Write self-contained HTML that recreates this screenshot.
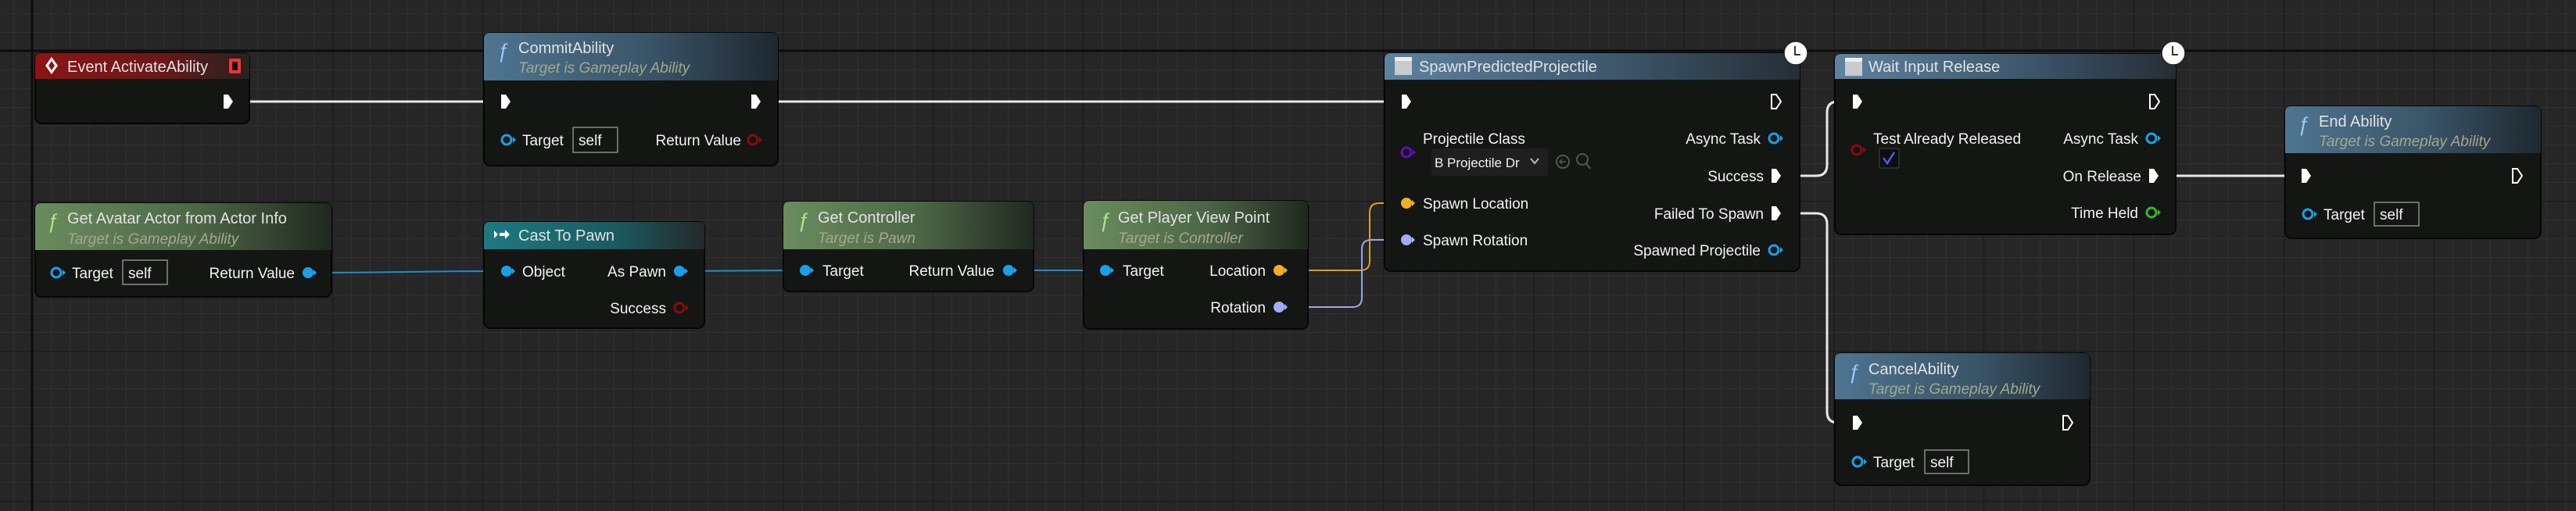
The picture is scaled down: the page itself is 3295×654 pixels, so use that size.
<!DOCTYPE html>
<html><head><meta charset="utf-8">
<style>
html,body{margin:0;padding:0;background:#262626;width:3295px;height:654px;overflow:hidden}
svg{display:block}
text{font-family:"Liberation Sans",sans-serif;}
.t{fill:#e2e2e2;font-size:20px}
.s{fill:#a4a88c;font-size:19px;font-style:italic}
.l{fill:#f2f2f2;font-size:19px}
.f{fill:#9cc8ff;font-size:26px;font-style:italic;font-family:"Liberation Sans",sans-serif}
.fg{fill:#a8e890;font-size:26px;font-style:italic;font-family:"Liberation Sans",sans-serif}
.body{fill:#141614;stroke:#060606;stroke-width:2}
</style></head><body>
<svg width="3295" height="654" viewBox="0 0 3295 654" xmlns="http://www.w3.org/2000/svg">
<defs>
<pattern id="fine" x="41" y="65" width="24" height="24" patternUnits="userSpaceOnUse">
<path d="M0 0H24M0 0V24" stroke="#303030" stroke-width="2" fill="none"/></pattern>
<pattern id="mid" x="41" y="65" width="192" height="192" patternUnits="userSpaceOnUse">
<path d="M0 0H192M0 0V192" stroke="#1b1b1b" stroke-width="2.5" fill="none"/></pattern>
<linearGradient id="gRed" x1="0" x2="1"><stop offset="0" stop-color="#8e1414"/><stop offset="0.6" stop-color="#6a1818"/><stop offset="1" stop-color="#262222"/></linearGradient>
<linearGradient id="gBlue" x1="0" x2="1"><stop offset="0" stop-color="#4e7590"/><stop offset="0.55" stop-color="#3a5568"/><stop offset="1" stop-color="#1e2830"/></linearGradient>
<linearGradient id="gBlue2" x1="0" x2="1"><stop offset="0" stop-color="#5d83a0"/><stop offset="0.5" stop-color="#405c72"/><stop offset="1" stop-color="#252e36"/></linearGradient>
<linearGradient id="gGreen" x1="0" x2="1"><stop offset="0" stop-color="#6a8c5e"/><stop offset="0.55" stop-color="#4c6646"/><stop offset="1" stop-color="#20281f"/></linearGradient>
<linearGradient id="gTeal" x1="0" x2="1"><stop offset="0" stop-color="#1d7a82"/><stop offset="0.6" stop-color="#1a5a60"/><stop offset="1" stop-color="#24292a"/></linearGradient>
</defs>
<rect width="3295" height="654" fill="#262626"/>
<rect width="3295" height="654" fill="url(#fine)"/>
<rect width="3295" height="654" fill="url(#mid)"/>
<path d="M41 0V654M0 65H3295" stroke="#0c0c0c" stroke-width="3"/>

<g fill="none" stroke-linecap="round">
<path d="M299 130H640" stroke="#e8e8e8" stroke-width="3"/>
<path d="M974 130H1790" stroke="#e8e8e8" stroke-width="3"/>
<path d="M403 349C520 349 520 347 640 347" stroke="#1a8fd0" stroke-width="2"/>
<path d="M878 347L1022 346" stroke="#1a8fd0" stroke-width="2"/>
<path d="M1298 346L1406 346" stroke="#1a8fd0" stroke-width="2"/>
<path d="M1645 346H1740Q1752 346 1752 334V272Q1752 260 1764 260H1792" stroke="#d9a21a" stroke-width="2"/>
<path d="M1645 393H1730Q1742 393 1742 381V319Q1742 307 1754 307H1792" stroke="#9aa6e8" stroke-width="2"/>
<path d="M2280 225H2323Q2337 225 2337 211V144Q2337 130 2351 130H2368" stroke="#e8e8e8" stroke-width="3"/>
<path d="M2280 273H2323Q2337 273 2337 287V527Q2337 541 2351 541H2368" stroke="#e8e8e8" stroke-width="3"/>
<path d="M2762 225H2943" stroke="#e8e8e8" stroke-width="3"/>
</g>

<g>
<rect x="45" y="68" width="274" height="90" rx="8" class="body"/>
<path d="M53 68H311Q319 68 319 76V101H45V76Q45 68 53 68Z" fill="url(#gRed)"/>
<path d="M66 73L74 84L66 95L58 84Z" fill="#fff"/><path d="M66 78L70 84L66 90L62 84Z" fill="#8e1414"/>
<text x="86" y="92" class="t">Event ActivateAbility</text>
<rect x="293" y="75" width="15" height="19" rx="2" fill="#ff3030"/><rect x="297" y="79" width="7" height="11" fill="#111"/>
<path d="M286 121H292L298 130L292 139H286Z" fill="#fff"/>
</g>

<g>
<rect x="619" y="42" width="376" height="170" rx="8" class="body"/>
<path d="M627 42H987Q995 42 995 50V103H619V50Q619 42 627 42Z" fill="url(#gBlue)"/>
<text x="636" y="74" class="f">ƒ</text>
<text x="663" y="68" class="t">CommitAbility</text>
<text x="663" y="93" class="s">Target is Gameplay Ability</text>
<path d="M641 121H647L653 130L647 139H641Z" fill="#fff"/>
<path d="M961 121H967L973 130L967 139H961Z" fill="#fff"/>
<circle cx="648" cy="179" r="6" fill="none" stroke="#1aa0e8" stroke-width="3"/><path d="M656 175L660 179L656 183Z" fill="#1aa0e8"/>
<text x="668" y="186" class="l">Target</text>
<rect x="733" y="163" width="57" height="32" fill="none" stroke="#8a8a8a" stroke-width="1.5"/><text x="740" y="186" class="l">self</text>
<text x="948" y="186" class="l" text-anchor="end">Return Value</text>
<circle cx="963" cy="179" r="6" fill="none" stroke="#8a0a0a" stroke-width="3"/><path d="M971 175L975 179L971 183Z" fill="#8a0a0a"/>
</g>

<g>
<rect x="45" y="260" width="379" height="120" rx="8" class="body"/>
<path d="M53 260H416Q424 260 424 268V320H45V268Q45 260 53 260Z" fill="url(#gGreen)"/>
<text x="60" y="292" class="fg">ƒ</text>
<text x="86" y="286" class="t">Get Avatar Actor from Actor Info</text>
<text x="86" y="312" class="s">Target is Gameplay Ability</text>
<circle cx="72" cy="349" r="6" fill="none" stroke="#1aa0e8" stroke-width="3"/><path d="M80 345L84 349L80 353Z" fill="#1aa0e8"/>
<text x="92" y="356" class="l">Target</text>
<rect x="157" y="333" width="57" height="31" fill="none" stroke="#8a8a8a" stroke-width="1.5"/><text x="164" y="356" class="l">self</text>
<text x="377" y="356" class="l" text-anchor="end">Return Value</text>
<circle cx="394" cy="349" r="7" fill="#1aa0e8"/><path d="M401 345L405 349L401 353Z" fill="#1aa0e8"/>
</g>

<g>
<rect x="619" y="284" width="282" height="136" rx="8" class="body"/>
<path d="M627 284H893Q901 284 901 292V319H619V292Q619 284 627 284Z" fill="url(#gTeal)"/>
<path d="M632 295L637 300L632 305Z M639 298H646V294L652 300L646 306V302H639Z" fill="#fff"/>
<text x="663" y="308" class="t">Cast To Pawn</text>
<circle cx="648" cy="347" r="7" fill="#1aa0e8"/><path d="M655 343L659 347L655 351Z" fill="#1aa0e8"/>
<text x="668" y="354" class="l">Object</text>
<text x="852" y="354" class="l" text-anchor="end">As Pawn</text>
<circle cx="869" cy="347" r="7" fill="#1aa0e8"/><path d="M876 343L880 347L876 351Z" fill="#1aa0e8"/>
<text x="852" y="401" class="l" text-anchor="end">Success</text>
<circle cx="869" cy="394" r="6" fill="none" stroke="#8a0a0a" stroke-width="3"/><path d="M877 390L881 394L877 398Z" fill="#8a0a0a"/>
</g>

<g>
<rect x="1002" y="258" width="320" height="115" rx="8" class="body"/>
<path d="M1010 258H1314Q1322 258 1322 266V319H1002V266Q1002 258 1010 258Z" fill="url(#gGreen)"/>
<text x="1020" y="291" class="fg">ƒ</text>
<text x="1046" y="285" class="t">Get Controller</text>
<text x="1046" y="311" class="s">Target is Pawn</text>
<circle cx="1030" cy="346" r="7" fill="#1aa0e8"/><path d="M1037 342L1041 346L1037 350Z" fill="#1aa0e8"/>
<text x="1052" y="353" class="l">Target</text>
<text x="1272" y="353" class="l" text-anchor="end">Return Value</text>
<circle cx="1290" cy="346" r="7" fill="#1aa0e8"/><path d="M1297 342L1301 346L1297 350Z" fill="#1aa0e8"/>
</g>

<g>
<rect x="1386" y="257" width="287" height="164" rx="8" class="body"/>
<path d="M1394 257H1665Q1673 257 1673 265V319H1386V265Q1386 257 1394 257Z" fill="url(#gGreen)"/>
<text x="1406" y="291" class="fg">ƒ</text>
<text x="1430" y="285" class="t">Get Player View Point</text>
<text x="1430" y="311" class="s">Target is Controller</text>
<circle cx="1414" cy="346" r="7" fill="#1aa0e8"/><path d="M1421 342L1425 346L1421 350Z" fill="#1aa0e8"/>
<text x="1436" y="353" class="l">Target</text>
<text x="1619" y="353" class="l" text-anchor="end">Location</text>
<circle cx="1636" cy="346" r="7" fill="#f0b020"/><path d="M1643 342L1647 346L1643 350Z" fill="#f0b020"/>
<text x="1619" y="400" class="l" text-anchor="end">Rotation</text>
<circle cx="1636" cy="393" r="7" fill="#a0acf5"/><path d="M1643 389L1647 393L1643 397Z" fill="#a0acf5"/>
</g>

<g>
<rect x="1771" y="68" width="531" height="279" rx="8" class="body"/>
<path d="M1779 68H2294Q2302 68 2302 76V102H1771V76Q1771 68 1779 68Z" fill="url(#gBlue2)"/>
<rect x="1784" y="73" width="22" height="23" fill="#c8ccd0"/><rect x="1784" y="73" width="22" height="5" fill="#eee"/>
<text x="1815" y="92" class="t">SpawnPredictedProjectile</text>
<path d="M1793 121H1799L1805 130L1799 139H1793Z" fill="#fff"/>
<path d="M2266 121H2272L2278 130L2272 139H2266Z" fill="none" stroke="#fff" stroke-width="2"/>
<text x="1820" y="184" class="l">Projectile Class</text>
<circle cx="1799" cy="195" r="6" fill="none" stroke="#5a10c0" stroke-width="3"/><path d="M1807 191L1811 195L1807 199Z" fill="#5a10c0"/>
<rect x="1831" y="190" width="149" height="35" rx="3" fill="#1f1f1f"/>
<text x="1835" y="214" class="l" style="font-size:17px" fill="#aaa">B Projectile Dr</text>
<path d="M1958 203L1963 209L1968 203" fill="none" stroke="#bbb" stroke-width="2"/>
<circle cx="1999" cy="207" r="8" fill="none" stroke="#555" stroke-width="2"/><path d="M2003 207H1995M1998 204L1995 207L1998 210" fill="none" stroke="#555" stroke-width="1.5"/>
<circle cx="2024" cy="204" r="7" fill="none" stroke="#555" stroke-width="2"/><path d="M2029 209L2034 216" stroke="#555" stroke-width="2"/>
<text x="2252" y="184" class="l" text-anchor="end">Async Task</text>
<circle cx="2269" cy="177" r="6" fill="none" stroke="#1aa0e8" stroke-width="3"/><path d="M2277 173L2281 177L2277 181Z" fill="#1aa0e8"/>
<text x="2256" y="232" class="l" text-anchor="end">Success</text>
<path d="M2266 216H2272L2278 225L2272 234H2266Z" fill="#fff"/>
<circle cx="1799" cy="260" r="7" fill="#f0b020"/><path d="M1806 256L1810 260L1806 264Z" fill="#f0b020"/>
<text x="1820" y="267" class="l">Spawn Location</text>
<text x="2256" y="280" class="l" text-anchor="end">Failed To Spawn</text>
<path d="M2266 264H2272L2278 273L2272 282H2266Z" fill="#fff"/>
<circle cx="1799" cy="307" r="7" fill="#a0acf5"/><path d="M1806 303L1810 307L1806 311Z" fill="#a0acf5"/>
<text x="1820" y="314" class="l">Spawn Rotation</text>
<text x="2252" y="327" class="l" text-anchor="end">Spawned Projectile</text>
<circle cx="2269" cy="320" r="6" fill="none" stroke="#1aa0e8" stroke-width="3"/><path d="M2277 316L2281 320L2277 324Z" fill="#1aa0e8"/>
<circle cx="2297" cy="68" r="15" fill="#fff" stroke="#222" stroke-width="1.5"/><path d="M2296 59V70H2303" fill="none" stroke="#333" stroke-width="2"/>
</g>

<g>
<rect x="2347" y="69" width="436" height="231" rx="8" class="body"/>
<path d="M2355 69H2775Q2783 69 2783 77V101H2347V77Q2347 69 2355 69Z" fill="url(#gBlue2)"/>
<rect x="2360" y="74" width="22" height="23" fill="#c8ccd0"/><rect x="2360" y="74" width="22" height="5" fill="#eee"/>
<text x="2390" y="92" class="t">Wait Input Release</text>
<path d="M2370 121H2376L2382 130L2376 139H2370Z" fill="#fff"/>
<path d="M2750 121H2756L2762 130L2756 139H2750Z" fill="none" stroke="#fff" stroke-width="2"/>
<circle cx="2375" cy="192" r="6" fill="none" stroke="#8a0a0a" stroke-width="3"/><path d="M2383 188L2387 192L2383 196Z" fill="#8a0a0a"/>
<text x="2396" y="184" class="l">Test Already Released</text>
<rect x="2404" y="190" width="25" height="25" rx="2" fill="#0e0e0e" stroke="#333" stroke-width="1.5"/>
<path d="M2409 202L2414 209L2423 195" fill="none" stroke="#4a5cf0" stroke-width="2.5"/>
<text x="2735" y="184" class="l" text-anchor="end">Async Task</text>
<circle cx="2752" cy="177" r="6" fill="none" stroke="#1aa0e8" stroke-width="3"/><path d="M2760 173L2764 177L2760 181Z" fill="#1aa0e8"/>
<text x="2739" y="232" class="l" text-anchor="end">On Release</text>
<path d="M2749 216H2755L2761 225L2755 234H2749Z" fill="#fff"/>
<text x="2735" y="279" class="l" text-anchor="end">Time Held</text>
<circle cx="2752" cy="272" r="6" fill="none" stroke="#3bb32b" stroke-width="3"/><path d="M2760 268L2764 272L2760 276Z" fill="#3bb32b"/>
<circle cx="2780" cy="68" r="15" fill="#fff" stroke="#222" stroke-width="1.5"/><path d="M2779 59V70H2786" fill="none" stroke="#333" stroke-width="2"/>
</g>

<g>
<rect x="2923" y="136" width="327" height="169" rx="8" class="body"/>
<path d="M2931 136H3242Q3250 136 3250 144V196H2923V144Q2923 136 2931 136Z" fill="url(#gBlue)"/>
<text x="2939" y="168" class="f">ƒ</text>
<text x="2966" y="162" class="t">End Ability</text>
<text x="2966" y="187" class="s">Target is Gameplay Ability</text>
<path d="M2944 216H2950L2956 225L2950 234H2944Z" fill="#fff"/>
<path d="M3214 216H3220L3226 225L3220 234H3214Z" fill="none" stroke="#fff" stroke-width="2"/>
<circle cx="2952" cy="274" r="6" fill="none" stroke="#1aa0e8" stroke-width="3"/><path d="M2960 270L2964 274L2960 278Z" fill="#1aa0e8"/>
<text x="2972" y="281" class="l">Target</text>
<rect x="3037" y="259" width="57" height="30" fill="none" stroke="#8a8a8a" stroke-width="1.5"/><text x="3044" y="281" class="l">self</text>
</g>

<g>
<rect x="2347" y="452" width="326" height="169" rx="8" class="body"/>
<path d="M2355 452H2665Q2673 452 2673 460V511H2347V460Q2347 452 2355 452Z" fill="url(#gBlue)"/>
<text x="2364" y="485" class="f">ƒ</text>
<text x="2390" y="479" class="t">CancelAbility</text>
<text x="2390" y="504" class="s">Target is Gameplay Ability</text>
<path d="M2370 532H2376L2382 541L2376 550H2370Z" fill="#fff"/>
<path d="M2639 532H2645L2651 541L2645 550H2639Z" fill="none" stroke="#fff" stroke-width="2"/>
<circle cx="2376" cy="591" r="6" fill="none" stroke="#1aa0e8" stroke-width="3"/><path d="M2384 587L2388 591L2384 595Z" fill="#1aa0e8"/>
<text x="2396" y="598" class="l">Target</text>
<rect x="2462" y="576" width="56" height="30" fill="none" stroke="#8a8a8a" stroke-width="1.5"/><text x="2469" y="598" class="l">self</text>
</g>
</svg>
</body></html>
